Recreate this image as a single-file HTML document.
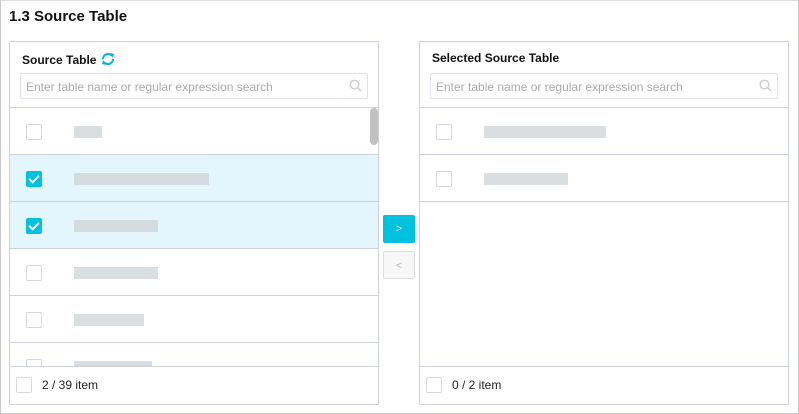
<!DOCTYPE html>
<html><head><style>
*{box-sizing:border-box;margin:0;padding:0}
body{width:799px;height:414px;background:#fff;font-family:"Liberation Sans",sans-serif;position:relative;overflow:hidden}
.outer{position:absolute;left:0;top:0;width:799px;height:414px;border:1px solid #c8c8c8;border-top:1px solid #ddd}
.title{position:absolute;left:9px;top:8px;font-size:15px;font-weight:bold;color:#111}
.panel{position:absolute;top:41px;width:370px;height:364px;border:1px solid #ccd0e0}
.ph{position:absolute;left:12px;top:9px;font-size:12px;font-weight:bold;color:#111}
.search{position:absolute;left:10px;top:31px;width:348px;height:26px;border:1px solid #e0e3ea;border-radius:2px;font-size:12px;color:#aaa;padding:6px 5px}
.list{position:absolute;left:0;top:65px;width:368px;border-top:1px solid #ccd0e0}
.row{position:relative;height:47px;border-bottom:1px solid #ccd0e0}
.row.sel{background:#e3f6fb}
.cb{position:absolute;left:16px;top:16px;width:16px;height:16px;border:1px solid #d5d8de;border-radius:2px;background:#fff}
.cb.on{background:#00c1de;border-color:#00c1de}
.cb.on:after{content:"";position:absolute;left:4px;top:1px;width:4px;height:8px;border:solid #fff;border-width:0 2px 2px 0;transform:rotate(45deg)}
.blur{position:absolute;top:18px;height:12px;background:#cfd6d9;opacity:.8}
.foot{position:absolute;left:0;bottom:0;width:368px;height:38px;border-top:1px solid #ccd0e0;font-size:12px;color:#222}
.foot .cb{left:6px;top:10px}
.foot span{position:absolute;left:32px;top:11px}
.btn{position:absolute;left:383px;width:32px;height:28px;border-radius:2px;font-size:11px;text-align:center;line-height:28px}
</style></head><body>
<div class="outer"></div>
<div class="title">1.3 Source Table</div>
<div class="panel" style="left:9px">
<div class="ph">Source Table <svg width="16" height="16" viewBox="0 0 16 16" style="vertical-align:-3px"><path d="M3 8a5 5 0 0 1 9-3" stroke="#00b4dc" stroke-width="2" fill="none"/><path d="M13 8a5 5 0 0 1-9 3" stroke="#00b4dc" stroke-width="2" fill="none"/><path d="M10 2l4 1-1 4z M6 14l-4-1 1-4z" fill="#00b4dc"/></svg></div>
<div class="search">Enter table name or regular expression search<svg style="position:absolute;right:5px;top:5px" width="13" height="13" viewBox="0 0 13 13"><circle cx="5.5" cy="5.5" r="4.3" stroke="#ccd" stroke-width="1.5" fill="none"/><path d="M8.5 8.5l3.5 3.5" stroke="#ccd" stroke-width="1.5"/></svg></div>
<div class="list" style="height:260px;overflow:hidden">
<div class="row"><div class="cb"></div><div class="blur" style="left:64px;width:28px"></div></div>
<div class="row sel"><div class="cb on"></div><div class="blur" style="left:64px;width:135px"></div></div>
<div class="row sel"><div class="cb on"></div><div class="blur" style="left:64px;width:84px"></div></div>
<div class="row"><div class="cb"></div><div class="blur" style="left:64px;width:84px"></div></div>
<div class="row"><div class="cb"></div><div class="blur" style="left:64px;width:70px"></div></div>
<div class="row"><div class="cb"></div><div class="blur" style="left:64px;width:78px"></div></div>
<div style="position:absolute;left:360px;top:0;width:8px;height:37px;background:#c1c1c1;border-radius:4px"></div>
</div>
<div class="foot"><div class="cb"></div><span>2 / 39 item</span></div>
</div>
<div class="btn" style="top:215px;background:#00c1de;color:#fff">&gt;</div>
<div class="btn" style="top:251px;background:#f7f7f7;border:1px solid #ddd;color:#bbb">&lt;</div>
<div class="panel" style="left:419px">
<div class="ph">Selected Source Table</div>
<div class="search">Enter table name or regular expression search<svg style="position:absolute;right:5px;top:5px" width="13" height="13" viewBox="0 0 13 13"><circle cx="5.5" cy="5.5" r="4.3" stroke="#ccd" stroke-width="1.5" fill="none"/><path d="M8.5 8.5l3.5 3.5" stroke="#ccd" stroke-width="1.5"/></svg></div>
<div class="list">
<div class="row"><div class="cb"></div><div class="blur" style="left:64px;width:122px"></div></div>
<div class="row"><div class="cb"></div><div class="blur" style="left:64px;width:84px"></div></div>
</div>
<div class="foot"><div class="cb"></div><span>0 / 2 item</span></div>
</div>
</body></html>
